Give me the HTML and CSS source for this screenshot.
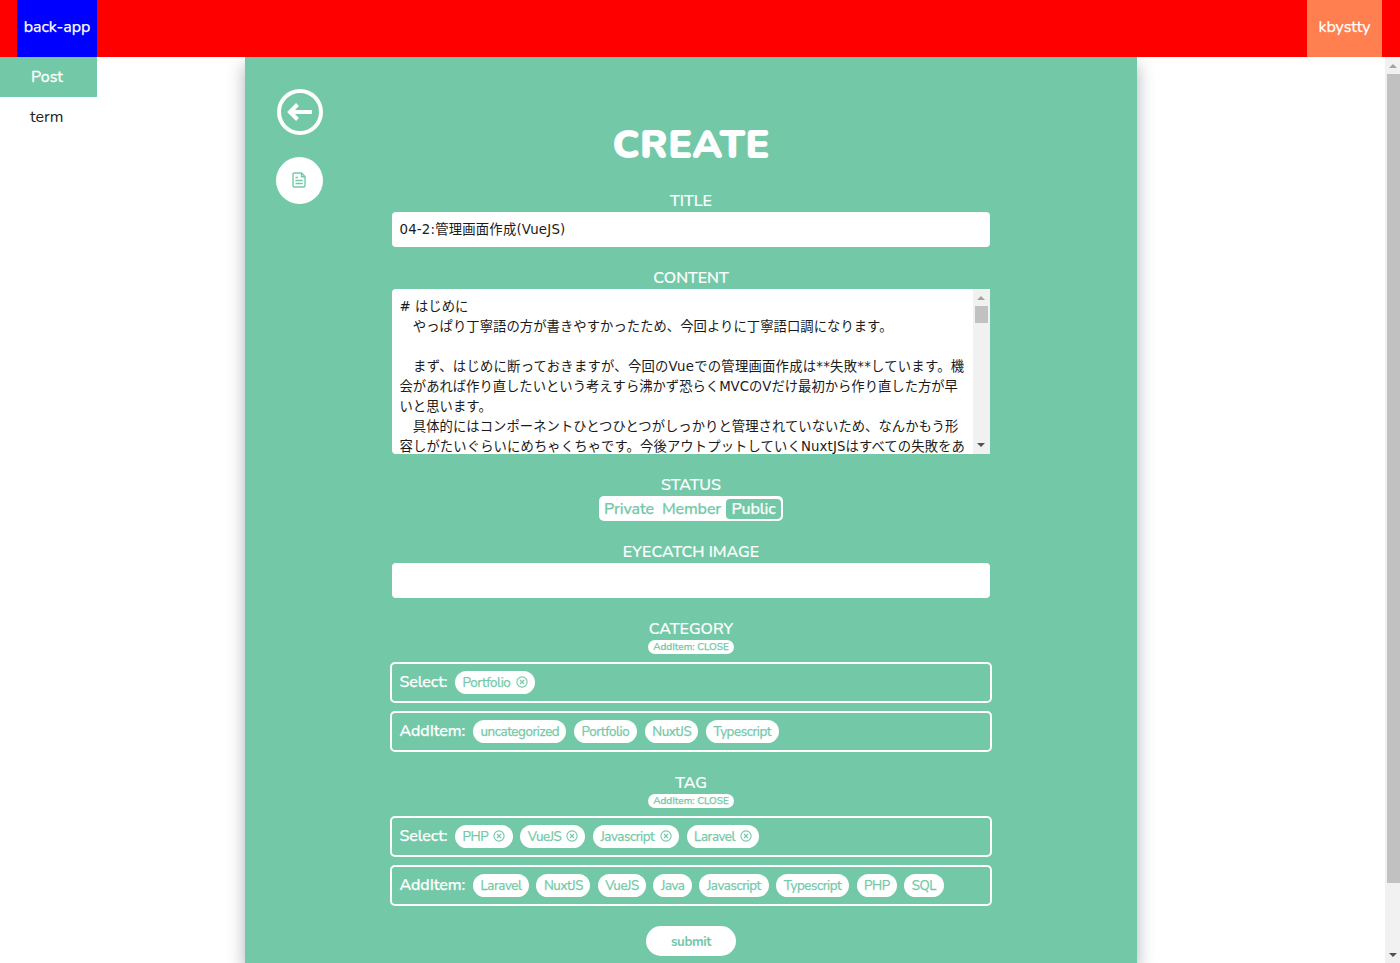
FILE: index.html
```html
<!DOCTYPE html>
<html lang="ja">
<head>
<meta charset="utf-8">
<title>back-app</title>
<link rel="stylesheet" href="styles.css">
</head>
<body>
<svg class="defs" width="0" height="0">
  <symbol id="close" viewBox="0 0 12 12"><circle cx="6" cy="6" r="5.1"/><path d="M4 4l4 4M8 4l-4 4"/></symbol>
</svg>
<header class="header">
  <div class="brand"><span>back-app</span></div>
  <div class="user"><span>kbystty</span></div>
</header>
<div class="body">
  <nav class="side">
    <div class="side-item active"><span>Post</span></div>
    <div class="side-item"><span>term</span></div>
  </nav>
  <main class="main">
    <section class="panel">
      <div class="tools">
        <svg class="back" viewBox="0 0 46 46"><circle cx="23" cy="23" r="21"/><path d="M35 23H14M20.500 15.500L13 23l7.500 7.500"/></svg>
        <div class="doc"><svg class="doc-icon" viewBox="0 0 14 16"><path d="M2.200 1H9.500L13 4.500V13.500Q13 15 11.700 15H2.300Q1 15 1 13.500V2.300Q1 1 2.200 1ZM9.500 1V4.700H13M3.500 5.500H6M3.500 8.500H10.700M3.500 11.500H10.700"/></svg></div>
      </div>
      <form class="form">
        <h1 class="heading">CREATE</h1>
        <div class="group"><div class="label">TITLE</div><div class="input">04-2:管理画面作成(VueJS)</div></div>
        <div class="group"><div class="label">CONTENT</div>
          <div class="area">
            <div class="area-text">
              <div class="line"># はじめに</div>
              <div class="line">　やっぱり丁寧語の方が書きやすかったため、今回よりに丁寧語口調になります。</div>
              <div class="line"></div>
              <div class="line wide">　まず、はじめに断っておきますが、今回のVueでの管理画面作成は**失敗**しています。機</div>
              <div class="line tight">会があれば作り直したいという考えすら沸かず恐らくMVCのVだけ最初から作り直した方が早</div>
              <div class="line">いと思います。</div>
              <div class="line">　具体的にはコンポーネントひとつひとつがしっかりと管理されていないため、なんかもう形</div>
              <div class="line mid">容しがたいぐらいにめちゃくちゃです。今後アウトプットしていくNuxtJSはすべての失敗をあ</div>
            </div>
            <div class="scroll"><i class="up"></i><b class="thumb"></b><i class="down"></i></div>
          </div>
        </div>
        <div class="group"><div class="label">STATUS</div>
          <div class="toggle"><div class="opt o1">Private</div><div class="opt o2">Member</div><div class="opt o3 on">Public</div></div>
        </div>
        <div class="group"><div class="label">EYECATCH IMAGE</div><div class="input"></div></div>
        <div class="group"><div class="label">CATEGORY</div>
          <div class="mini">AddItem: CLOSE</div>
          <div class="box"><span class="name sel">Select:</span><div class="pill w80"><span>Portfolio</span><svg class="x"><use href="#close"/></svg></div></div>
          <div class="box"><span class="name add">AddItem:</span><div class="pill w93"><span>uncategorized</span></div><div class="pill w63"><span>Portfolio</span></div><div class="pill w54"><span>NuxtJS</span></div><div class="pill w73"><span>Typescript</span></div></div>
        </div>
        <div class="group"><div class="label">TAG</div>
          <div class="mini">AddItem: CLOSE</div>
          <div class="box"><span class="name sel">Select:</span><div class="pill w58"><span>PHP</span><svg class="x"><use href="#close"/></svg></div><div class="pill w65"><span>VueJS</span><svg class="x"><use href="#close"/></svg></div><div class="pill w86"><span>Javascript</span><svg class="x"><use href="#close"/></svg></div><div class="pill w73"><span>Laravel</span><svg class="x"><use href="#close"/></svg></div></div>
          <div class="box"><span class="name add">AddItem:</span><div class="pill w56"><span>Laravel</span></div><div class="pill w54"><span>NuxtJS</span></div><div class="pill w48"><span>VueJS</span></div><div class="pill w38"><span>Java</span></div><div class="pill w69"><span>Javascript</span></div><div class="pill w73"><span>Typescript</span></div><div class="pill w40"><span>PHP</span></div><div class="pill w39"><span>SQL</span></div></div>
        </div>
        <div class="submit">submit</div>
      </form>
    </section>
  </main>
  <div class="page-scroll"><i class="up"></i><b class="page-thumb"></b><i class="down"></i></div>
</div>
</body>
</html>
```
FILE: styles.css
```css
* { box-sizing: border-box; }
body { margin: 0; height: 963px; overflow: hidden; background: #fff; font: 16px/22px Nunito, Lato, sans-serif; color: #222; display: flex; flex-direction: column; }
.defs { position: absolute; }
span { white-space: nowrap; }
.header { height: 57px; flex: none; background: #f00; display: flex; justify-content: space-between; padding: 0 18px 0 17px; color: #fff; -webkit-text-stroke: .25px; }
.brand, .user { display: flex; align-items: center; justify-content: center; padding-bottom: 3px; }
.brand { width: 80px; background: #00f; }
.user { width: 75px; background: #ff7f50; }
.body { display: flex; height: 906px; }
.side { width: 97px; flex: none; }
.side-item { height: 40px; padding-left: 30px; line-height: 40px; }
.side-item.active { background: #73c9a7; color: #fff; padding-left: 31px; -webkit-text-stroke: .3px; }
.main { flex: 1; padding-left: 148px; overflow: hidden; }
.panel { width: 892px; height: 906px; background: #73c9a7; box-shadow: 0 8px 16px rgba(50, 60, 80, .4); display: flex; color: #fff; }
.tools { width: 145px; flex: none; padding: 32px 0 0 31px; display: flex; flex-direction: column; gap: 22px; }
.back { width: 46px; height: 46px; margin-left: 1px; fill: none; stroke: #fff; stroke-width: 4; }
.doc { width: 47px; height: 47px; border-radius: 50%; background: #fff; display: flex; align-items: center; justify-content: center; padding: 0 1px 1px 0; }
.doc-icon { width: 14px; height: 16px; fill: none; stroke: #73c9a7; stroke-width: 1.4; }
.form { width: 602px; display: flex; flex-direction: column; align-items: center; padding-top: 68px; }
.heading { margin: 0 0 25px; height: 40px; line-height: 40px; font-size: 40px; font-weight: 900; }
.group { width: 602px; margin-bottom: 20px; display: flex; flex-direction: column; align-items: center; }
.label { height: 22px; font-weight: 500; -webkit-text-stroke: .2px; }
.input { width: 598px; height: 35px; background: #fff; border-radius: 4px; padding: 0 7.500px; line-height: 35px; letter-spacing: .2px; }
.input, .area-text { font-family: "DejaVu Sans", "Noto Sans CJK JP", sans-serif; font-size: 13.333px; color: #1a1a1a; white-space: nowrap; }
.area { width: 598px; height: 165px; display: flex; background: #fff; border-radius: 4px 0 0 4px; overflow: hidden; }
.area-text { flex: 1; padding: 8px 0 0 7.500px; overflow: hidden; }
.line { height: 20px; line-height: 20px; letter-spacing: .04px; }
.wide { letter-spacing: .24px; }
.mid { letter-spacing: .11px; }
.tight { letter-spacing: -.01px; }
.scroll, .page-scroll { background: #f1f1f1; display: flex; flex-direction: column; align-items: flex-start; flex: none; padding-left: 2px; }
.scroll { width: 17px; }
.page-scroll { width: 15px; }
.up, .down { width: 0; height: 0; border: 4px solid transparent; margin-left: 2px; }
.up { border-top: 0; border-bottom-color: #a3a3a3; margin-top: 7px; margin-bottom: 6px; }
.down { border-bottom: 0; border-top-color: #505050; margin-top: auto; margin-bottom: 6px; }
.scroll .down { margin-bottom: 7px; }
.thumb { width: 13px; height: 17px; background: #c1c1c1; }
.page-thumb { width: 13px; height: 809px; background: #c1c1c1; }
.toggle { width: 184px; height: 25px; border-radius: 5px; background: #fff; color: #73c9a7; display: flex; padding: 3px 2px; font-weight: 500; letter-spacing: -.1px; -webkit-text-stroke: .25px; }
.opt { height: 20px; line-height: 20px; border-radius: 4px; text-align: center; }
.o1 { width: 56px; } .o2 { width: 69px; } .o3 { width: 55px; }
.on { background: #73c9a7; color: #fff; }
.mini { width: 86px; height: 14px; border-radius: 7px; background: #fff; color: #73c9a7; font-size: 10px; line-height: 14px; font-weight: 500; text-align: center; -webkit-text-stroke: .25px; }
.box { width: 602px; height: 41px; margin-top: 8px; border: 2px solid #fff; border-radius: 5px; display: flex; align-items: center; gap: 7.500px; padding: 0 7.500px; }
.name { font-weight: 500; margin-top: -2px; letter-spacing: -.1px; -webkit-text-stroke: .25px; }
.sel { width: 48px; } .add { width: 66px; }
.pill { height: 23px; flex: none; border-radius: 11.5px; background: #fff; color: #73c9a7; font-size: 13.333px; line-height: 24px; letter-spacing: -.4px; padding-left: 7.500px; display: flex; align-items: center; -webkit-text-stroke: .25px; }
.x { width: 12px; height: 12px; flex: none; fill: none; stroke: #73c9a7; stroke-width: 1.1; margin: -1px 7.500px 0 auto; }
.w80 { width: 80px; } .w93 { width: 93.4px; } .w63 { width: 63.3px; } .w54 { width: 53.8px; } .w73 { width: 72.8px; }
.w58 { width: 57.8px; } .w65 { width: 65.1px; } .w86 { width: 86.2px; } .w56 { width: 55.9px; } .w48 { width: 48.3px; }
.w38 { width: 38.4px; } .w69 { width: 69.4px; } .w40 { width: 40.1px; } .w39 { width: 39.4px; }
.submit { width: 90px; height: 30px; border-radius: 15px; background: #fff; color: #73c9a7; text-align: center; font-size: 13.333px; line-height: 32px; font-weight: 700; letter-spacing: -.4px; }
```
